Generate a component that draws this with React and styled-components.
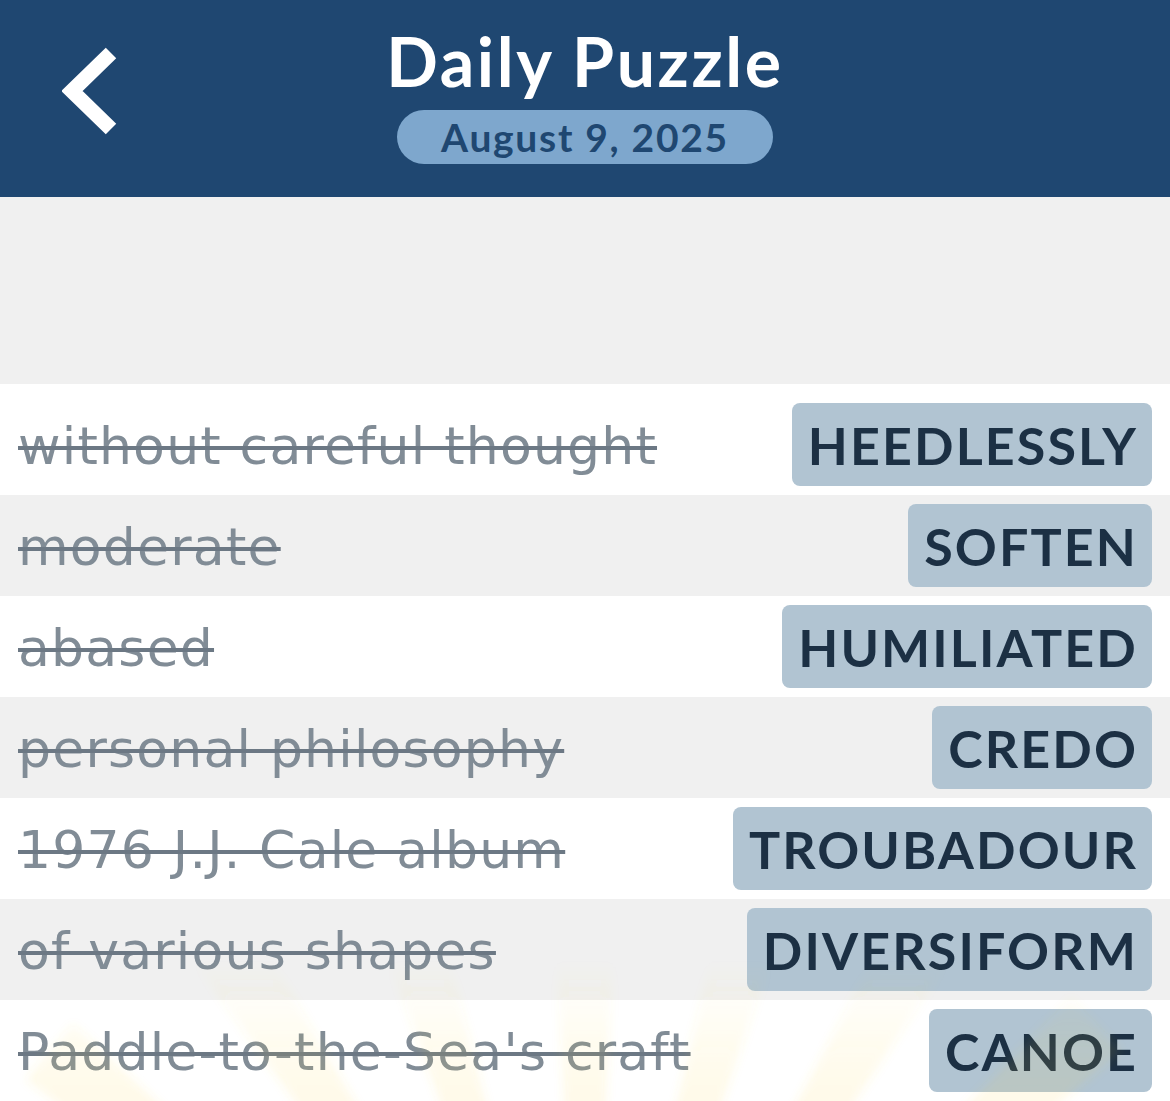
import styled, { createGlobalStyle } from 'styled-components';

const GlobalStyle = createGlobalStyle`
  * { box-sizing: border-box; }
  body {
    margin: 0;
    background: #f0f0f0;
    font-family: "DejaVu Sans", "Noto Sans", sans-serif;
  }
`;

const clues = [
  { clue: 'without careful thought', answer: 'HEEDLESSLY' },
  { clue: 'moderate', answer: 'SOFTEN' },
  { clue: 'abased', answer: 'HUMILIATED' },
  { clue: 'personal philosophy', answer: 'CREDO' },
  { clue: '1976 J.J. Cale album', answer: 'TROUBADOUR' },
  { clue: 'of various shapes', answer: 'DIVERSIFORM' },
  { clue: "Paddle-to-the-Sea's craft", answer: 'CANOE' },
];

const BackIcon = () => (
  <svg width="60" height="90" viewBox="0 0 60 90">
    <polyline points="49,7 10,45 49,83" fill="none" stroke="#fff" strokeWidth="15" strokeLinejoin="miter" />
  </svg>
);

// faint sunburst glow sitting over the last rows
const Rays = () => {
  const cx = 585;
  const cy = 1500;
  const angles = [-50, -33, -17, 0, 16, 31, 47];
  return (
    <RaysSvg width="1170" height="200" viewBox="0 960 1170 200" preserveAspectRatio="none">
      <defs>
        <linearGradient id="fade" x1="0" y1="960" x2="0" y2="1160" gradientUnits="userSpaceOnUse">
          <stop offset="0" stopColor="#ffd84a" stopOpacity="0" />
          <stop offset="0.5" stopColor="#ffd84a" stopOpacity="0.1" />
          <stop offset="1" stopColor="#ffc93a" stopOpacity="0.15" />
        </linearGradient>
        <filter id="soft">
          <feGaussianBlur stdDeviation="5" />
        </filter>
      </defs>
      <g filter="url(#soft)">
        {angles.map((a) => {
          const r = 700;
          const w = 3;
          const p = (deg) => {
            const rad = ((deg - 90) * Math.PI) / 180;
            return `${cx + r * Math.cos(rad)},${cy + r * Math.sin(rad)}`;
          };
          return <polygon key={a} points={`${cx},${cy} ${p(a - w)} ${p(a + w)}`} fill="url(#fade)" />;
        })}
      </g>
    </RaysSvg>
  );
};

export default function App() {
  return (
    <Page>
      <GlobalStyle />
      <Header>
        <BackButton aria-label="Back">
          <BackIcon />
        </BackButton>
        <TitleBlock>
          <Title>Daily Puzzle</Title>
          <DatePill>August 9, 2025</DatePill>
        </TitleBlock>
      </Header>
      <Spacer />
      <List>
        {clues.map((c, i) => (
          <Row key={c.answer} $alt={i % 2 === 1}>
            <Clue>{c.clue}</Clue>
            <Answer>{c.answer}</Answer>
          </Row>
        ))}
        <Rays />
      </List>
    </Page>
  );
}

const Page = styled.div`
  width: 1170px;
  min-height: 1101px;
  overflow: hidden;
  background: #f0f0f0;
`;

const Header = styled.header`
  height: 197px;
  background: #1f4771;
  display: grid;
  grid-template-columns: 1fr auto 1fr;
  align-items: start;
`;

const BackButton = styled.button`
  justify-self: start;
  margin: 46px 0 0 62px;
  padding: 0;
  border: none;
  background: none;
  display: flex;
  cursor: pointer;
`;

const TitleBlock = styled.div`
  grid-column: 2;
  display: flex;
  flex-direction: column;
  align-items: center;
  padding-top: 21px;
`;

const Title = styled.h1`
  margin: 0;
  color: #fff;
  font-family: "Lato", "Noto Sans", sans-serif;
  font-weight: 700;
  font-size: 68px;
  line-height: 80px;
  letter-spacing: 2.6px;
`;

const DatePill = styled.div`
  margin-top: 9px;
  width: 376px;
  height: 54px;
  border-radius: 27px;
  background: #7ea7cd;
  color: #1f4771;
  font-family: "Lato", "Noto Sans", sans-serif;
  font-weight: 700;
  font-size: 39px;
  display: flex;
  align-items: center;
  justify-content: center;
  letter-spacing: 1.7px;
`;

const Spacer = styled.div`
  height: 187px;
  background: #f0f0f0;
`;

const List = styled.div`
  position: relative;
  background: #fff;
  padding-top: 10px;
`;

const Row = styled.div`
  height: 101px;
  display: flex;
  align-items: center;
  justify-content: space-between;
  padding: 0 18px;
  background: ${(p) => (p.$alt ? '#f0f0f0' : '#fff')};
`;

const Clue = styled.span`
  font-family: "DejaVu Sans", "Noto Sans", sans-serif;
  font-weight: 400;
  font-size: 52px;
  color: #818c96;
  letter-spacing: 1.2px;
  text-decoration: line-through;
  text-decoration-color: #6c7884;
  text-decoration-thickness: 4px;
  padding-top: 2px;
`;

const Answer = styled.span`
  height: 83px;
  padding: 0 14px 0 16px;
  border-radius: 8px;
  background: #b1c4d2;
  color: #1c3044;
  font-family: "Lato", "Noto Sans", sans-serif;
  font-weight: 700;
  font-size: 52px;
  letter-spacing: 2.1px;
  display: flex;
  align-items: center;
`;

const RaysSvg = styled.svg`
  position: absolute;
  left: 0;
  bottom: -60px;
  pointer-events: none;
`;
